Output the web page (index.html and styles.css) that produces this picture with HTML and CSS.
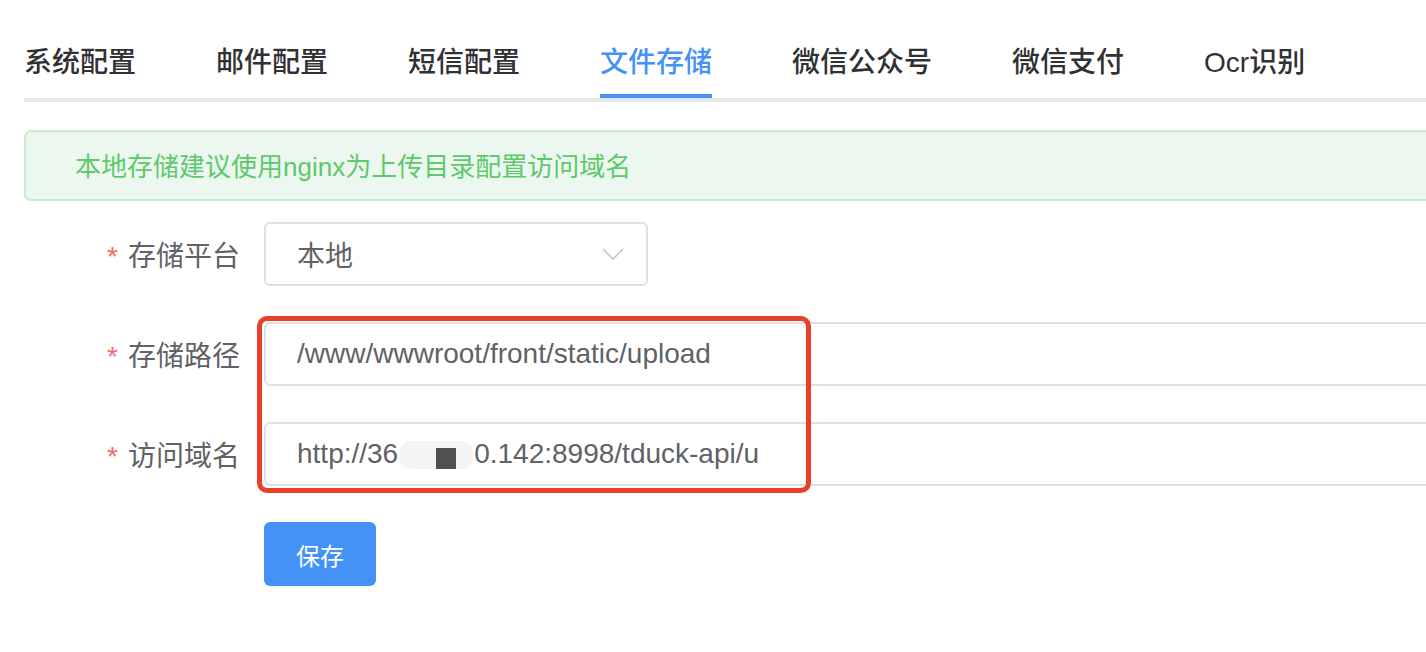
FILE: index.html
```html
<!DOCTYPE html>
<html lang="zh-CN">
<head>
<meta charset="utf-8">
<title>文件存储</title>
<link rel="stylesheet" href="styles.css">
</head>
<body>
<div class="page">
  <nav class="tabs">
    <div class="tab first">系统配置</div>
    <div class="tab">邮件配置</div>
    <div class="tab">短信配置</div>
    <div class="tab active">文件存储</div>
    <div class="tab">微信公众号</div>
    <div class="tab">微信支付</div>
    <div class="tab">Ocr识别</div>
  </nav>

  <div class="alert">本地存储建议使用nginx为上传目录配置访问域名</div>

  <div class="form">
    <div class="row">
      <label class="label"><span class="req">*</span>存储平台</label>
      <div class="select">
        <span>本地</span>
        <svg class="chev" width="22" height="12" viewBox="0 0 22 12"><path d="M1 1 L11 11 L21 1" fill="none" stroke="#c0c4cc" stroke-width="1.6"/></svg>
      </div>
    </div>
    <div class="row">
      <label class="label"><span class="req">*</span>存储路径</label>
      <div class="input">/www/wwwroot/front/static/upload</div>
    </div>
    <div class="row">
      <label class="label"><span class="req">*</span>访问域名</label>
      <div class="input"><span>http://36</span><span class="blur"><span class="blot"></span></span><span>0.142:8998/tduck-api/u</span></div>
    </div>
    <div class="row">
      <div class="label"></div>
      <button class="btn">保存</button>
    </div>
    <div class="mark"></div>
  </div>
</div>
</body>
</html>
```

FILE: styles.css
```css
html, body {
  margin: 0;
  padding: 0;
  background: #ffffff;
  overflow: hidden;
}
body {
  font-family: "Liberation Sans", "Noto Sans CJK SC", sans-serif;
}
.page {
  width: 1500px;
  padding-left: 24px;
}
.tabs {
  display: flex;
  padding-top: 28px;
  border-bottom: 4px solid #e4e7ed;
}
.tab {
  font-size: 28px;
  font-weight: 500;
  color: #303133;
  line-height: 70px;
  padding: 0 40px;
  margin-bottom: -4px;
  border-bottom: 4px solid transparent;
}
.tab.first {
  padding-left: 0;
}
.tab.active {
  color: #4592f6;
  border-bottom: none;
  padding-bottom: 4px;
  background: linear-gradient(#4592f6, #4592f6) no-repeat content-box;
  background-size: 100% 4px;
  background-position: 0 100%;
  background-clip: border-box;
}
.alert {
  margin-top: 28px;
  height: 71px;
  box-sizing: border-box;
  border: 2px solid #c8ecca;
  border-radius: 7px;
  background: #ecf8ef;
  color: #5ec86c;
  font-size: 26px;
  line-height: 70px;
  padding-left: 49px;
  overflow: hidden;
}
.form {
  position: relative;
  margin-top: 21px;
}
.row {
  display: flex;
  align-items: center;
  height: 64px;
  margin-bottom: 36px;
}
.label {
  width: 240px;
  box-sizing: border-box;
  padding-right: 24px;
  text-align: right;
  font-size: 28px;
  color: #606266;
  flex: none;
}
.req {
  color: #f56c6c;
  margin-right: 10px;
}
.select, .input {
  box-sizing: border-box;
  height: 64px;
  border: 2px solid #dcdfe6;
  border-radius: 6px;
  padding-left: 31px;
  font-size: 28px;
  color: #606266;
  display: flex;
  align-items: center;
  white-space: nowrap;
}
.select {
  width: 384px;
  justify-content: space-between;
  padding-right: 22px;
}
.chev {
  display: block;
}
.input {
  width: 1236px;
}
.blur {
  display: inline-flex;
  align-items: flex-end;
  width: 73px;
  height: 28px;
  margin: 0 1px 0 2px;
  background: #f4f4f6;
  border-radius: 10px;
  position: relative;
  top: 1px;
}
.blot {
  display: block;
  width: 20px;
  height: 21px;
  background: #505050;
  margin-left: 36px;
}
.btn {
  width: 112px;
  height: 64px;
  border: none;
  border-radius: 6px;
  background: #4592f6;
  color: #ffffff;
  font-size: 24px;
  font-family: "Liberation Sans", "Noto Sans CJK SC", sans-serif;
  padding: 0;
}
.mark {
  position: absolute;
  left: 233px;
  top: 94px;
  width: 554px;
  height: 177px;
  box-sizing: border-box;
  border: 5px solid #e8402a;
  border-radius: 10px;
}
```
